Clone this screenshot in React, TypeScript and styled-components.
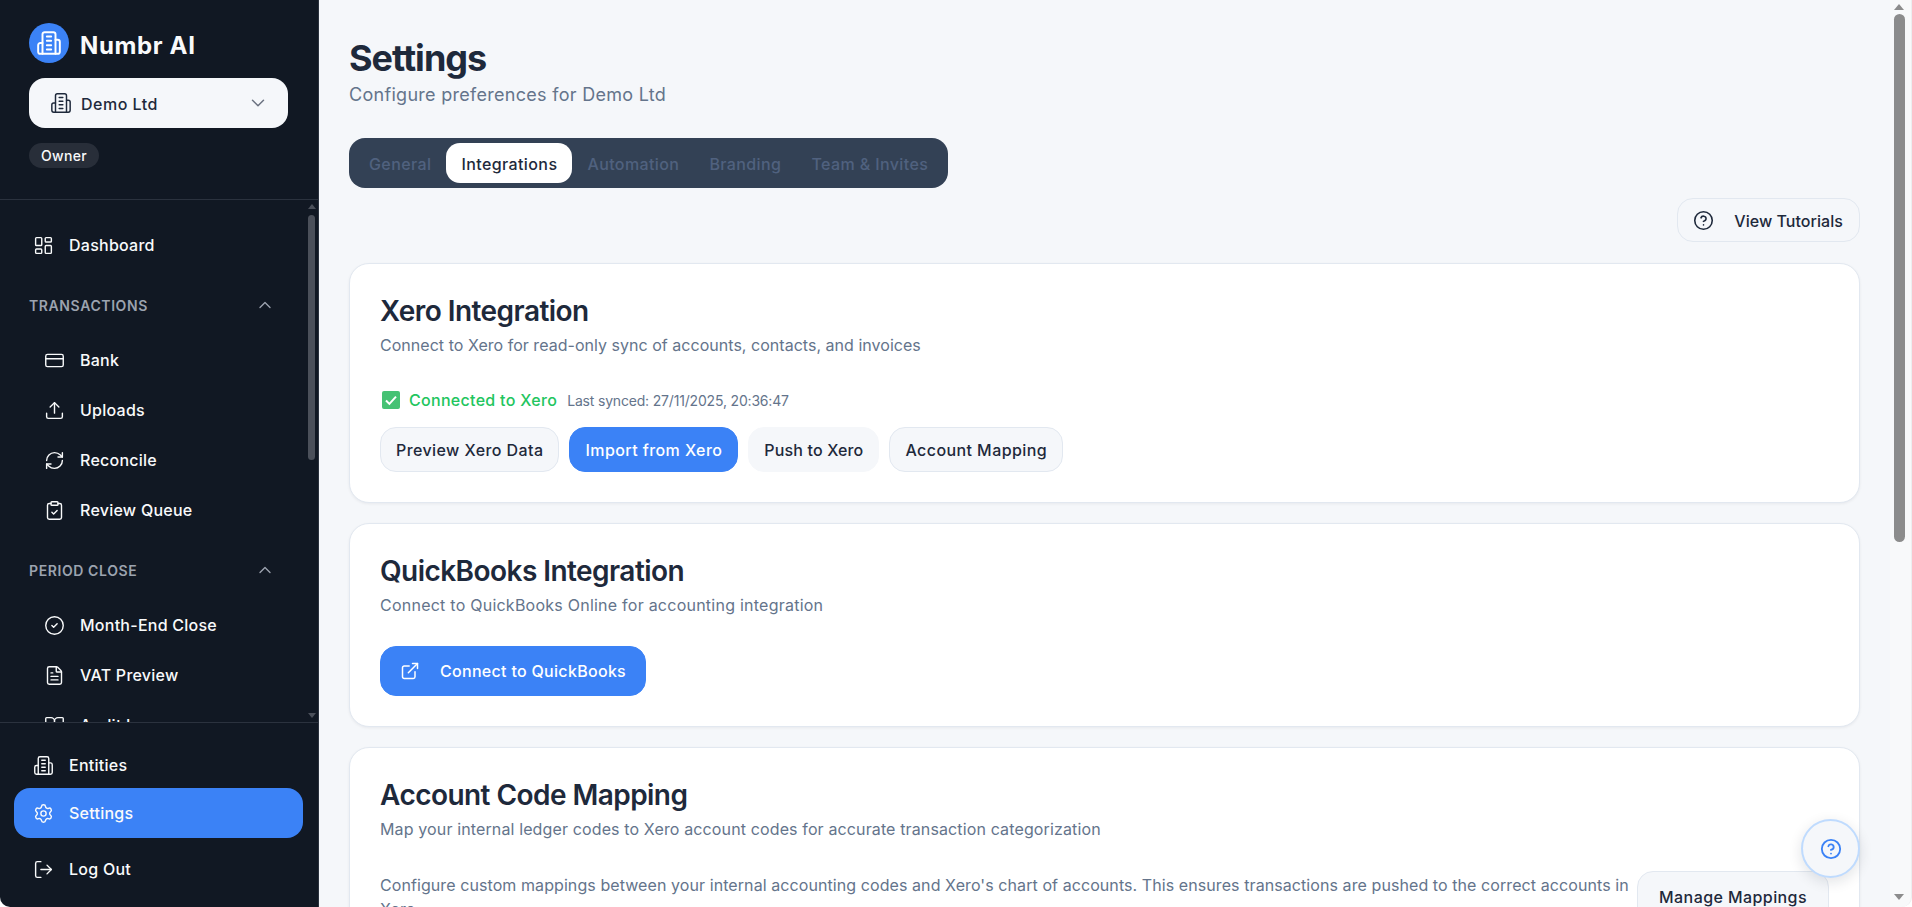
import React from 'react';
import styled, { createGlobalStyle } from 'styled-components';
import {
  BookOpen,
  ChevronDown,
  ChevronUp,
  CircleCheck,
  CircleHelp,
  ClipboardCheck,
  CreditCard,
  ExternalLink,
  FileText,
  LayoutDashboard,
  LogOut,
  RefreshCw,
  Settings as SettingsIcon,
  Upload,
} from 'lucide-react';

const GlobalStyle = createGlobalStyle`
  * { box-sizing: border-box; }
  html, body { margin: 0; height: 100%; overflow: hidden; background: #fff; }
  body { font-family: Inter, "Noto Sans", "Liberation Sans", sans-serif; }
`;

const Shell = styled.div`
  display: flex;
  height: 100vh;
  overflow: hidden;
`;

const Sidebar = styled.aside`
  width: 319px;
  flex-shrink: 0;
  display: flex;
  flex-direction: column;
  background: #111823;
  border-right: 1px solid #2b323e;
  border-bottom-left-radius: 10px;
  color: #f9fafb;
`;

const SideHeader = styled.div`
  height: 200px;
  flex-shrink: 0;
  padding: 23px 29px 0;
  border-bottom: 1px solid #2b323e;
`;

const Brand = styled.div`
  display: flex;
  align-items: center;
  gap: 11px;
`;

const LogoCircle = styled.div`
  width: 40px;
  height: 40px;
  border-radius: 50%;
  background: #3b82f6;
  display: flex;
  align-items: center;
  justify-content: center;
  color: #fff;
`;

const BrandName = styled.span`
  padding-top: 5px;
  font-size: 24px;
  font-weight: 700;
  line-height: 32px;
  letter-spacing: 0.65px;
`;

const EntitySelect = styled.div`
  margin-top: 15px;
  width: 259px;
  height: 50px;
  border-radius: 16px;
  background: #f5f7fa;
  color: #1e293b;
  display: flex;
  align-items: center;
  padding: 0 19px 0 21px;
  font-size: 16px;
  font-weight: 500;
`;

const EntityName = styled.span`
  flex: 1;
  margin-left: 9px;
  padding-top: 1px;
  letter-spacing: 0.5px;
`;

const RoleBadge = styled.span`
  display: inline-block;
  margin-top: 15px;
  height: 25px;
  padding: 0 12px;
  border-radius: 13px;
  background: #282e39;
  font-size: 14px;
  font-weight: 500;
  line-height: 26px;
  letter-spacing: 0.3px;
`;

const NavArea = styled.div`
  flex: 1;
  min-height: 0;
  display: flex;
`;

const NavScroll = styled.nav`
  flex: 1;
  min-width: 0;
  overflow: hidden;
  padding: 20px 0 0 14px;
`;

const NavRow = styled.div<{ $sub?: boolean; $active?: boolean }>`
  display: flex;
  align-items: center;
  gap: 15px;
  height: 50px;
  width: 289px;
  margin-left: ${(p) => (p.$sub ? '11px' : '0')};
  padding-left: 19px;
  border-radius: 16px;
  background: ${(p) => (p.$active ? '#3b82f6' : 'transparent')};
  font-size: 16px;
  font-weight: 500;
  letter-spacing: 0.25px;
  flex-shrink: 0;
`;

const SectionHead = styled.div`
  display: flex;
  align-items: center;
  justify-content: space-between;
  width: 246px;
  height: 50px;
  margin: 10px 0 5px 15px;
  color: #9ca3af;
  font-size: 14px;
  font-weight: 600;
  letter-spacing: 0.6px;
  text-transform: uppercase;
`;

const NavRail = styled.div`
  width: 14px;
  flex-shrink: 0;
  display: flex;
  flex-direction: column;
  align-items: center;
  padding: 4px 0 0 1px;
`;

const RailThumb = styled.div`
  width: 7px;
  height: 245px;
  border-radius: 4px;
  background: #4b505a;
  margin-top: 6px;
`;

const RailGap = styled.div`
  flex: 1;
`;

const RailArrow = styled.div<{ $down?: boolean }>`
  width: 0;
  height: 0;
  border-left: 4px solid transparent;
  border-right: 4px solid transparent;
  ${(p) => (p.$down ? 'border-top: 5px solid #4b505a; margin-bottom: 4px;' : 'border-bottom: 5px solid #4b505a;')}
`;

const SideFooter = styled.div`
  flex-shrink: 0;
  height: 185px;
  padding: 19px 0 0 14px;
  border-top: 1px solid #2b323e;
`;

const FooterEntity = styled(NavRow)`
  height: 46px;
`;

const FooterLogout = styled(NavRow)`
  margin-top: 6px;
`;

const Main = styled.main`
  flex: 1;
  min-width: 0;
  overflow: hidden;
  background: #f5f7fa;
  padding: 36px 30px 0;
`;

const PageTitle = styled.h1`
  margin: 0;
  color: #1e293b;
  font-size: 36px;
  font-weight: 700;
  line-height: 44px;
  letter-spacing: -1px;
`;

const PageSubtitle = styled.p`
  margin: 0;
  padding-top: 1px;
  height: 28px;
  color: #64748b;
  font-size: 18px;
  line-height: 28px;
  letter-spacing: 0.29px;
`;

const TabList = styled.div`
  display: inline-flex;
  align-items: center;
  margin-top: 30px;
  height: 50px;
  padding: 5px;
  border-radius: 16px;
  background: #334155;
  vertical-align: top;
`;

const Tab = styled.div<{ $active?: boolean }>`
  height: 40px;
  padding: 0 15px;
  border-radius: 14px;
  background: ${(p) => (p.$active ? '#fff' : 'transparent')};
  color: ${(p) => (p.$active ? '#1e293b' : '#50617f')};
  font-size: 16px;
  font-weight: 500;
  line-height: 42px;
  letter-spacing: 0.4px;
`;

const Toolbar = styled.div`
  display: flex;
  justify-content: flex-end;
  margin: 10px 0 21px;
`;

const TutorialButton = styled.div`
  display: flex;
  align-items: center;
  gap: 20px;
  height: 44px;
  padding: 1px 16px 0 15px;
  border: 1px solid #e2e8f0;
  border-radius: 16px;
  color: #1e293b;
  font-size: 16px;
  font-weight: 500;
  letter-spacing: 0.05px;
`;

const Card = styled.section`
  margin-bottom: 20px;
  padding: 29px 30px;
  border: 1px solid #e2e8f0;
  border-radius: 20px;
  background: #fff;
  box-shadow: 0 1px 3px rgba(15, 23, 42, 0.06);
`;

const XeroCard = styled(Card)`
  padding-bottom: 30px;
`;

const CardTitle = styled.h2`
  margin: 0;
  color: #1e293b;
  font-size: 28px;
  font-weight: 600;
  line-height: 36px;
  letter-spacing: -0.55px;
`;

const CardDesc = styled.p<{ $track: number }>`
  margin: 4px 0 0;
  color: #64748b;
  font-size: 16px;
  line-height: 24px;
  letter-spacing: ${(p) => p.$track}px;
`;

const StatusRow = styled.div`
  display: flex;
  align-items: center;
  margin-top: 31px;
  padding-left: 2px;
  height: 24px;
`;

const StatusText = styled.span`
  margin-left: 9px;
  color: #22c55e;
  font-size: 16px;
  font-weight: 500;
  letter-spacing: 0.3px;
`;

const SyncText = styled.span`
  margin-left: 10px;
  color: #64748b;
  font-size: 14px;
  letter-spacing: -0.18px;
`;

const ButtonRow = styled.div`
  display: flex;
  gap: 10px;
  margin-top: 15px;
`;

const Button = styled.div<{ $primary?: boolean; $plain?: boolean }>`
  display: inline-flex;
  align-items: center;
  height: 45px;
  padding: 0 15px;
  flex-shrink: 0;
  border: 1px solid ${(p) => (p.$primary ? '#3b82f6' : p.$plain ? '#f5f7fa' : '#e2e8f0')};
  border-radius: 16px;
  background: ${(p) => (p.$primary ? '#3b82f6' : '#f5f7fa')};
  color: ${(p) => (p.$primary ? '#fff' : '#1e293b')};
  font-size: 16px;
  font-weight: 500;
  letter-spacing: ${(p) => (p.$plain ? '0.15px' : '0.42px')};
`;

const ConnectButton = styled(Button)`
  height: 50px;
  margin-top: 29px;
  margin-bottom: 1px;
  padding: 0 19px;
  gap: 20px;
  letter-spacing: 0.3px;
`;

const MappingRow = styled.div`
  display: flex;
  align-items: flex-start;
  gap: 6px;
  margin-top: 30px;
`;

const MappingText = styled.p`
  flex: 1;
  margin: 2px 0 0;
  color: #64748b;
  font-size: 16px;
  line-height: 24px;
  letter-spacing: 0.08px;
`;

const ManageButton = styled(Button)`
  height: 52px;
  padding: 0 21px;
`;

const HelpFab = styled.div`
  position: fixed;
  left: 1801px;
  top: 819px;
  width: 59px;
  height: 59px;
  border: 2px solid #bfdbfe;
  border-radius: 50%;
  background: #f5f7fa;
  color: #3b82f6;
  display: flex;
  align-items: center;
  justify-content: center;
  box-shadow: 0 4px 14px rgba(15, 23, 42, 0.12);
`;

const PageRail = styled.div`
  width: 22px;
  flex-shrink: 0;
  display: flex;
  flex-direction: column;
  align-items: center;
  padding: 4px 3px 0 0;
  background: #f8f9fa;
  border-right: 1px solid #eceef0;
  border-bottom-right-radius: 10px;
`;

const PageThumb = styled.div`
  width: 11px;
  height: 528px;
  margin-top: 4px;
  border-radius: 6px;
  background: #8c8c8c;
`;

const PageArrow = styled.div<{ $down?: boolean }>`
  width: 0;
  height: 0;
  border-left: 5px solid transparent;
  border-right: 5px solid transparent;
  ${(p) => (p.$down ? 'border-top: 6px solid #8c8c8c; margin-bottom: 7px;' : 'border-bottom: 6px solid #8c8c8c;')}
`;

const BuildingIcon: React.FC<{ size: number; strokeWidth?: number }> = ({ size, strokeWidth = 2 }) => (
  <svg width={size} height={size} viewBox="0 0 24 24" fill="none" stroke="currentColor" strokeWidth={strokeWidth} strokeLinecap="round" strokeLinejoin="round">
    <path d="M6 22V4a2 2 0 0 1 2-2h8a2 2 0 0 1 2 2v18Z" />
    <path d="M6 12H4a2 2 0 0 0-2 2v6a2 2 0 0 0 2 2h2" />
    <path d="M18 9h2a2 2 0 0 1 2 2v9a2 2 0 0 1-2 2h-2" />
    <path d="M10 6h4" />
    <path d="M10 10h4" />
    <path d="M10 14h4" />
    <path d="M10 18h4" />
  </svg>
);

const CheckEmoji = () => (
  <svg width="18" height="18" viewBox="0 0 18 18">
    <rect x="0" y="0" width="18" height="18" rx="2" fill="#45c274" />
    <path d="M4 9.5l3.4 3.4L14 5.6" fill="none" stroke="#fff" strokeWidth="2" />
  </svg>
);

const transactionItems = [
  { label: 'Bank', icon: CreditCard },
  { label: 'Uploads', icon: Upload },
  { label: 'Reconcile', icon: RefreshCw },
  { label: 'Review Queue', icon: ClipboardCheck },
];

const closeItems = [
  { label: 'Month-End Close', icon: CircleCheck },
  { label: 'VAT Preview', icon: FileText },
  { label: 'Audit Log', icon: BookOpen },
];

const tabs = ['General', 'Integrations', 'Automation', 'Branding', 'Team & Invites'];
const ICON = 21;
const STROKE = 1.6;

const App: React.FC = () => {
  return (
    <Shell>
      <GlobalStyle />
      <Sidebar>
        <SideHeader>
          <Brand>
            <LogoCircle>
              <BuildingIcon size={26} strokeWidth={1.8} />
            </LogoCircle>
            <BrandName>Numbr AI</BrandName>
          </Brand>
          <EntitySelect>
            <BuildingIcon size={22} strokeWidth={1.6} />
            <EntityName>Demo Ltd</EntityName>
            <ChevronDown size={22} color="#6b7280" strokeWidth={1.6} />
          </EntitySelect>
          <RoleBadge>Owner</RoleBadge>
        </SideHeader>
        <NavArea>
          <NavScroll>
            <NavRow>
              <LayoutDashboard size={ICON} strokeWidth={STROKE} />
              Dashboard
            </NavRow>
            <SectionHead>
              Transactions
              <ChevronUp size={20} strokeWidth={1.6} />
            </SectionHead>
            {transactionItems.map((item) => (
              <NavRow $sub key={item.label}>
                <item.icon size={ICON} strokeWidth={STROKE} />
                {item.label}
              </NavRow>
            ))}
            <SectionHead>
              Period Close
              <ChevronUp size={20} strokeWidth={1.6} />
            </SectionHead>
            {closeItems.map((item) => (
              <NavRow $sub key={item.label}>
                <item.icon size={ICON} strokeWidth={STROKE} />
                {item.label}
              </NavRow>
            ))}
          </NavScroll>
          <NavRail>
            <RailArrow />
            <RailThumb />
            <RailGap />
            <RailArrow $down />
          </NavRail>
        </NavArea>
        <SideFooter>
          <FooterEntity>
            <BuildingIcon size={ICON} strokeWidth={STROKE} />
            Entities
          </FooterEntity>
          <NavRow $active>
            <SettingsIcon size={ICON} strokeWidth={STROKE} />
            Settings
          </NavRow>
          <FooterLogout>
            <LogOut size={ICON} strokeWidth={STROKE} />
            Log Out
          </FooterLogout>
        </SideFooter>
      </Sidebar>
      <Main>
        <PageTitle>Settings</PageTitle>
        <PageSubtitle>Configure preferences for Demo Ltd</PageSubtitle>
        <TabList>
          {tabs.map((tab) => (
            <Tab key={tab} $active={tab === 'Integrations'}>
              {tab}
            </Tab>
          ))}
        </TabList>
        <Toolbar>
          <TutorialButton>
            <CircleHelp size={21} strokeWidth={1.8} />
            View Tutorials
          </TutorialButton>
        </Toolbar>
        <XeroCard>
          <CardTitle>Xero Integration</CardTitle>
          <CardDesc $track={0.03}>Connect to Xero for read-only sync of accounts, contacts, and invoices</CardDesc>
          <StatusRow>
            <CheckEmoji />
            <StatusText>Connected to Xero</StatusText>
            <SyncText>Last synced: 27/11/2025, 20:36:47</SyncText>
          </StatusRow>
          <ButtonRow>
            <Button>Preview Xero Data</Button>
            <Button $primary>Import from Xero</Button>
            <Button $plain>Push to Xero</Button>
            <Button>Account Mapping</Button>
          </ButtonRow>
        </XeroCard>
        <Card>
          <CardTitle>QuickBooks Integration</CardTitle>
          <CardDesc $track={0.24}>Connect to QuickBooks Online for accounting integration</CardDesc>
          <ConnectButton $primary>
            <ExternalLink size={20} strokeWidth={1.8} />
            Connect to QuickBooks
          </ConnectButton>
        </Card>
        <Card>
          <CardTitle>Account Code Mapping</CardTitle>
          <CardDesc $track={0.13}>Map your internal ledger codes to Xero account codes for accurate transaction categorization</CardDesc>
          <MappingRow>
            <MappingText>
              Configure custom mappings between your internal accounting codes and Xero's chart of accounts. This ensures transactions are pushed to the correct accounts in Xero.
            </MappingText>
            <ManageButton>Manage Mappings</ManageButton>
          </MappingRow>
        </Card>
      </Main>
      <PageRail>
        <PageArrow />
        <PageThumb />
        <RailGap />
        <PageArrow $down />
      </PageRail>
      <HelpFab>
        <CircleHelp size={22} strokeWidth={2} />
      </HelpFab>
    </Shell>
  );
};

export default App;
